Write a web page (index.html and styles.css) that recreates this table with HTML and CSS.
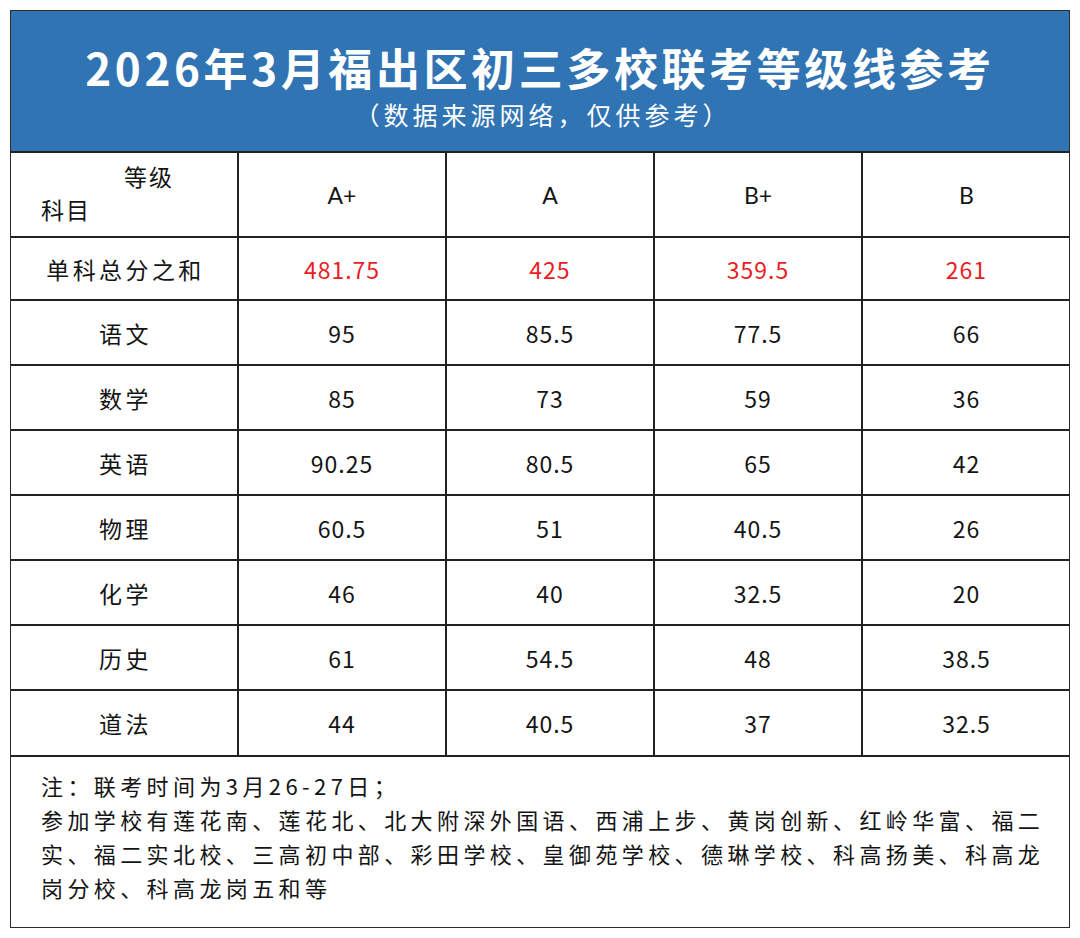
FILE: index.html
```html
<!DOCTYPE html>
<html lang="zh-CN">
<head>
<meta charset="utf-8">
<title>2026年3月福出区初三多校联考等级线参考</title>
<link rel="stylesheet" href="styles.css">
</head>
<body>
<div class="sheet">
  <header class="banner">
    <h1 class="title">2026年3月福出区初三多校联考等级线参考</h1>
    <p class="subtitle">（数据来源网络，仅供参考）</p>
  </header>
  <table class="grades">
    <colgroup>
      <col class="c-subj"><col class="c-val"><col class="c-val"><col class="c-val"><col class="c-val">
    </colgroup>
    <thead>
      <tr class="head-row">
        <th class="corner"><span class="corner-top">等级</span><span class="corner-bottom">科目</span></th>
        <th class="lvl">A+</th>
        <th class="lvl">A</th>
        <th class="lvl">B+</th>
        <th class="lvl">B</th>
      </tr>
    </thead>
    <tbody>
      <tr class="total-row"><td class="subj">单科总分之和</td><td class="red">481.75</td><td class="red">425</td><td class="red">359.5</td><td class="red">261</td></tr>
      <tr><td class="subj">语文</td><td>95</td><td>85.5</td><td>77.5</td><td>66</td></tr>
      <tr><td class="subj">数学</td><td>85</td><td>73</td><td>59</td><td>36</td></tr>
      <tr><td class="subj">英语</td><td>90.25</td><td>80.5</td><td>65</td><td>42</td></tr>
      <tr><td class="subj">物理</td><td>60.5</td><td>51</td><td>40.5</td><td>26</td></tr>
      <tr><td class="subj">化学</td><td>46</td><td>40</td><td>32.5</td><td>20</td></tr>
      <tr><td class="subj">历史</td><td>61</td><td>54.5</td><td>48</td><td>38.5</td></tr>
      <tr><td class="subj">道法</td><td>44</td><td>40.5</td><td>37</td><td>32.5</td></tr>
    </tbody>
  </table>
  <footer class="note">
    <p>注：联考时间为3月26-27日；</p>
    <p>参加学校有莲花南、莲花北、北大附深外国语、西浦上步、黄岗创新、红岭华富、福二实、福二实北校、三高初中部、彩田学校、皇御苑学校、德琳学校、科高扬美、科高龙岗分校、科高龙岗五和等</p>
  </footer>
</div>
</body>
</html>
```
FILE: styles.css
```css
* { box-sizing: border-box; }
html, body { margin: 0; padding: 0; background: #fff; }
body {
  padding: 10px;
  font-family: "Noto Sans CJK SC", "Noto Sans", sans-serif;
  color: #141414;
}
.sheet {
  width: 1060px;
  border: 1.5px solid #2a2a2a;
  background: #fff;
}
.banner {
  background: #3074b4;
  color: #fff;
  text-align: center;
  height: 142px;
  padding-top: 29px;
  border-bottom: 2px solid #222;
}
.title {
  margin: 0;
  font-size: 44px;
  line-height: 54px;
  font-weight: 700;
  letter-spacing: 3.6px;
}
.subtitle {
  margin: 3px 0 0;
  font-size: 25px;
  line-height: 34px;
  letter-spacing: 4px;
  font-weight: 400;
  padding-left: 6px;
}
.grades {
  width: 100%;
  border-collapse: collapse;
  border-style: hidden;
  table-layout: fixed;
}
.c-subj { width: 227px; }
.c-val { width: 208px; }
.grades th, .grades td {
  border: 2px solid #222;
  text-align: center;
  vertical-align: middle;
  padding: 0;
  font-size: 23px;
  font-weight: 400;
}
.grades td { height: 65px; letter-spacing: 1px; }
.grades td.subj { letter-spacing: 3.4px; padding-left: 3px; }
.total-row td { height: 63px; }
.red { color: #ea1c24; }
.head-row th { height: 84px; }
.lvl {
  font-family: "Lato", "Open Sans", sans-serif;
  font-size: 22px;
}
.corner-top, .corner-bottom {
  display: block;
  letter-spacing: 2px;
  line-height: 33px;
}
.corner-top { text-align: right; padding-right: 63px; margin-top: -4px; }
.corner-bottom { text-align: left; padding-left: 30px; }
.note {
  border-top: 2px solid #222;
  height: 172px;
  padding: 11px 18px 0 30px;
  font-size: 22px;
  line-height: 34px;
  letter-spacing: 4.4px;
}
.note p { margin: 0; }
```
